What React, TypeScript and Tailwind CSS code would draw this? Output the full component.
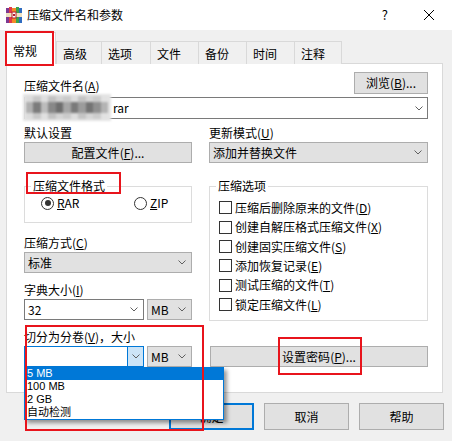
import type { ReactNode } from 'react';

const Key = ({ t, k, dots, tail }: { t: string; k: string; dots?: boolean; tail?: string }) => (
  <>
    {t}(<span className="underline underline-offset-[1px]">{k}</span>){dots ? '...' : ''}
    {tail}
  </>
);

const Chevron = () => (
  <svg width="8" height="5" viewBox="0 0 8 5" className="shrink-0">
    <path d="M0.5 0.5L4 4L7.5 0.5" fill="none" stroke="#606060" strokeWidth="1" />
  </svg>
);

const WinRarIcon = () => (
  <svg width="16" height="16" viewBox="0 0 16 16" className="ml-[6px] shrink-0">
    <rect x="0" y="1" width="3" height="15" fill="#7d3a92" />
    <rect x="3" y="0" width="3" height="16" fill="#e03a48" />
    <rect x="6" y="1" width="4" height="15" fill="#f28c28" />
    <rect x="10" y="0" width="3" height="16" fill="#3aa34a" />
    <rect x="13" y="1" width="3" height="15" fill="#2f6cc0" />
    <rect x="0" y="6" width="16" height="4" fill="#efe2c0" />
    <rect x="6" y="5" width="4" height="6" fill="#fff" stroke="#b3202e" strokeWidth="1" />
    <rect x="7" y="7" width="2" height="2" fill="#b3202e" />
  </svg>
);

const Btn = ({ className, children }: { className: string; children: ReactNode }) => (
  <div className={`flex items-center justify-center border border-[#adadad] bg-[#e1e1e1] leading-[16px] ${className}`}>
    {children}
  </div>
);

const Drop = ({ className, children }: { className: string; children?: ReactNode }) => (
  <div className={`flex h-[21px] items-center justify-between border border-[#adadad] bg-[#e1e1e1] pl-[3px] pr-[5px] leading-[16px] ${className}`}>
    <span>{children}</span>
    <Chevron />
  </div>
);

const Check = ({ h, children }: { h: string; children: ReactNode }) => (
  <div className={`flex items-center pl-[9px] leading-[16px] ${h}`}>
    <span className="h-[13px] w-[13px] shrink-0 border border-[#333] bg-white" />
    <span className="ml-[3px]">{children}</span>
  </div>
);

const tabs = [
  { label: '高级', w: 'w-[45px]' },
  { label: '选项', w: 'w-[49px]' },
  { label: '文件', w: 'w-[48px]' },
  { label: '备份', w: 'w-[48px]' },
  { label: '时间', w: 'w-[48px]' },
  { label: '注释', w: 'w-[48px] border-r' },
];

// blurred filename (privacy mosaic in the screenshot)
const mosaicTop = ['#dcdcdc', '#c8c8c8', '#e0e0e0', '#c2c2c2', '#d4d4d4', '#cacaca', '#dddddd', '#c4c4c4', '#d6d6d6', '#cccccc', '#e2e2e2'];
const mosaicMid = ['#b0b0b0', '#7c7c7c', '#bcbcbc', '#888888', '#6e6e6e', '#a6a6a6', '#7a7a7a', '#9c9c9c', '#747474', '#909090', '#b4b4b4'];

export default function App() {
  return (
    <div className="relative h-[441px] w-[452px] overflow-hidden bg-[#f0f0f0] font-['Noto_Sans_CJK_SC','Noto_Sans',sans-serif] text-[12px] text-black">
      {/* title bar */}
      <div className="flex h-[30px] items-center bg-white">
        <WinRarIcon />
        <span className="ml-[5px] leading-[16px]">压缩文件名和参数</span>
        <span className="ml-auto mr-[36px] text-[13px] leading-[16px]">?</span>
        <svg width="10" height="10" viewBox="0 0 10 10" className="mr-[18px]">
          <path d="M0 0L10 10M10 0L0 10" stroke="#000" strokeWidth="1" />
        </svg>
      </div>

      {/* tabs */}
      <div className="flex h-[34px] items-end pl-[6px]">
        <div className="relative z-10 h-[32px] w-[50px] border border-b-0 border-[#d9d9d9] bg-white pl-[6px] pt-[10px] leading-[16px]">
          常规
        </div>
        {tabs.map((t) => (
          <div key={t.label} className={`h-[23px] border-l border-t border-[#d9d9d9] bg-[#f0f0f0] pl-[6px] pt-[4px] leading-[16px] ${t.w}`}>
            {t.label}
          </div>
        ))}
      </div>

      {/* panel */}
      <div className="-mt-px ml-[6px] h-[330px] w-[437px] border border-[#d9d9d9] bg-white pl-[17px] pr-[14px] pt-[8px]">
        <div className="flex h-[22px] items-end justify-between">
          <span className="leading-[16px]">
            <Key t="压缩文件名" k="A" />
          </span>
          <Btn className="h-[22px] w-[74px]">
            <Key t="浏览" k="B" dots />
          </Btn>
        </div>
        <div className="relative mt-[3px] flex h-[22px] items-center justify-between border border-[#7a7a7a] bg-white pl-[88px] pr-[4px] leading-[16px]">
          <span>rar</span>
          <Chevron />
          <div className="absolute left-[-2px] top-[-4px] flex h-[27px] w-[88px] flex-col justify-center bg-[#e4e4e4] px-[3px] blur-[1px]">
            <div className="flex">
              {mosaicTop.map((c, i) => (
                <span key={i} className="h-[6px] w-[7.5px]" style={{ background: c }} />
              ))}
            </div>
            <div className="flex">
              {mosaicMid.map((c, i) => (
                <span key={i} className="h-[11px] w-[7.5px]" style={{ background: c }} />
              ))}
            </div>
            <div className="flex">
              {mosaicTop.map((c, i) => (
                <span key={i} className="h-[6px] w-[7.5px]" style={{ background: c }} />
              ))}
            </div>
          </div>
        </div>

        <div className="flex gap-[17px]">
          {/* left column */}
          <div className="w-[168px]">
            <div className="mt-[6px] leading-[16px]">默认设置</div>
            <Btn className="mt-[1px] h-[21px] w-full">
              <Key t="配置文件" k="F" dots />
            </Btn>
            <fieldset className="mt-[15px] border border-[#dcdcdc] pb-[11px]">
              <legend className="ml-[6px] px-[2px] leading-[16px]">压缩文件格式</legend>
              <div className="mt-[1px] flex h-[16px] items-center pl-[16px] leading-[16px]">
                <div className="flex w-[93px] items-center">
                  <span className="flex h-[13px] w-[13px] items-center justify-center rounded-full border border-[#333]">
                    <span className="h-[6px] w-[6px] rounded-full bg-[#333]" />
                  </span>
                  <span className="ml-[3px]">
                    <span className="underline underline-offset-[1px]">R</span>AR
                  </span>
                </div>
                <div className="flex items-center">
                  <span className="h-[13px] w-[13px] rounded-full border border-[#333]" />
                  <span className="ml-[3px]">
                    <span className="underline underline-offset-[1px]">Z</span>IP
                  </span>
                </div>
              </div>
            </fieldset>
            <div className="mt-[12px] leading-[16px]">
              <Key t="压缩方式" k="C" />
            </div>
            <Drop className="mt-[1px] w-full">标准</Drop>
            <div className="mt-[9px] leading-[16px]">
              <Key t="字典大小" k="I" />
            </div>
            <div className="mt-[1px] flex gap-[3px]">
              <div className="flex h-[21px] w-[120px] items-center justify-between border border-[#7a7a7a] bg-white pl-[3px] pr-[5px] leading-[16px]">
                <span>32</span>
                <Chevron />
              </div>
              <Drop className="w-[45px]">MB</Drop>
            </div>
            <div className="mt-[9px] leading-[16px]">
              <Key t="切分为分卷" k="V" tail="，大小" />
            </div>
            <div className="mt-[1px] flex gap-[3px]">
              <div className="relative flex h-[21px] w-[120px] border border-[#0078d7] bg-white">
                <div className="flex-1" />
                <div className="flex w-[16px] items-center justify-center border-l border-[#0078d7] bg-[#cce4f7]">
                  <Chevron />
                </div>
                <div className="absolute left-[-1px] top-[20px] z-20 w-[200px] border border-t-0 border-[#0078d7] bg-white font-['Liberation_Sans','Noto_Sans_CJK_SC',sans-serif] text-[11px] leading-[13px] shadow-[3px_3px_4px_rgba(0,0,0,0.4)]">
                  <div className="h-[13px] bg-[#0078d7] pl-[2px] text-white">5 MB</div>
                  <div className="h-[13px] pl-[2px]">100 MB</div>
                  <div className="h-[13px] pl-[2px]">2 GB</div>
                  <div className="h-[13px] pl-[2px]">自动检测</div>
                </div>
              </div>
              <Drop className="w-[45px]">MB</Drop>
            </div>
          </div>

          {/* right column */}
          <div className="w-[219px]">
            <div className="mt-[6px] leading-[16px]">
              <Key t="更新模式" k="U" />
            </div>
            <Drop className="mt-[1px] w-full">添加并替换文件</Drop>
            <fieldset className="mt-[15px] border border-[#dcdcdc] pb-[6px]">
              <legend className="ml-[6px] px-[2px] leading-[16px]">压缩选项</legend>
              <div className="mt-[4px]">
                <Check h="h-[19px]">
                  <Key t="压缩后删除原来的文件" k="D" />
                </Check>
                <Check h="h-[20px]">
                  <Key t="创建自解压格式压缩文件" k="X" />
                </Check>
                <Check h="h-[19px]">
                  <Key t="创建固实压缩文件" k="S" />
                </Check>
                <Check h="h-[19px]">
                  <Key t="添加恢复记录" k="E" />
                </Check>
                <Check h="h-[20px]">
                  <Key t="测试压缩的文件" k="T" />
                </Check>
                <Check h="h-[19px]">
                  <Key t="锁定压缩文件" k="L" />
                </Check>
              </div>
            </fieldset>
            <Btn className="ml-px mt-[25px] h-[21px] w-[218px]">
              <Key t="设置密码" k="P" dots />
            </Btn>
          </div>
        </div>
      </div>

      {/* dialog buttons */}
      <div className="mt-[10px] flex justify-end gap-[10px] pr-[8px]">
        <div className="flex h-[27px] w-[85px] items-center justify-center border-2 border-[#0078d7] bg-[#e1e1e1] leading-[16px]">确定</div>
        <Btn className="h-[27px] w-[85px]">取消</Btn>
        <Btn className="h-[27px] w-[85px]">帮助</Btn>
      </div>

      {/* red annotations */}
      <div className="pointer-events-none absolute left-[5px] top-[31px] z-30 h-[35px] w-[49px] border-2 border-[#e8141c]" />
      <div className="pointer-events-none absolute left-[26px] top-[172px] z-30 h-[22px] w-[95px] border-2 border-[#e8141c]" />
      <div className="pointer-events-none absolute left-[25px] top-[325px] z-30 h-[106px] w-[179px] border-2 border-[#e8141c]" />
      <div className="pointer-events-none absolute left-[278px] top-[337px] z-30 h-[38px] w-[84px] border-2 border-[#e8141c]" />
    </div>
  );
}
